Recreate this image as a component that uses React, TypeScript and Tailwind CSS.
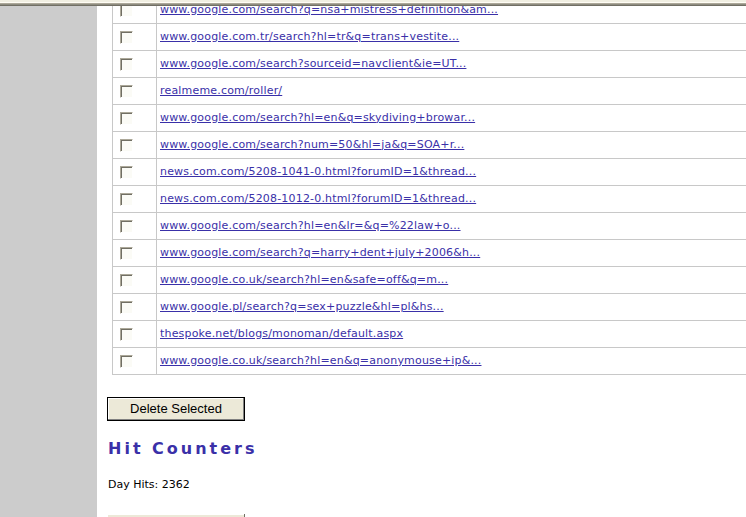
const links = [
    "www.google.com/search?q=nsa+mistress+definition&am...",
    "www.google.com.tr/search?hl=tr&q=trans+vestite...",
    "www.google.com/search?sourceid=navclient&ie=UT...",
    "realmeme.com/roller/",
    "www.google.com/search?hl=en&q=skydiving+browar...",
    "www.google.com/search?num=50&hl=ja&q=SOA+r...",
    "news.com.com/5208-1041-0.html?forumID=1&thread...",
    "news.com.com/5208-1012-0.html?forumID=1&thread...",
    "www.google.com/search?hl=en&lr=&q=%22law+o...",
    "www.google.com/search?q=harry+dent+july+2006&h...",
    "www.google.co.uk/search?hl=en&safe=off&q=m...",
    "www.google.pl/search?q=sex+puzzle&hl=pl&hs...",
    "thespoke.net/blogs/monoman/default.aspx",
    "www.google.co.uk/search?hl=en&q=anonymouse+ip&...",
];

const CheckBox = () => (
    <div className="w-[13px] h-[13px] border border-[#aca899] border-r-white border-b-white">
        <div className="w-full h-full bg-[#fbfbf6] shadow-[inset_1px_1px_0_#716f64]" />
    </div>
);

const App = () => {
    return (
        <div className="w-[746px] h-[517px] overflow-hidden bg-white flex flex-col font-['DejaVu_Sans',sans-serif] text-[11px] text-black">
            {/* window frame edge */}
            <div className="relative z-10 shrink-0 flex flex-col">
                <div className="h-[2px] bg-[#f1efe2]" />
                <div className="h-[1px] bg-[#fffdf5]" />
                <div className="h-[1px] bg-[#aca899]" />
                <div className="h-[1px] bg-[#8e8c80]" />
                <div className="h-[1px] bg-[#716f64]" />
            </div>

            <div className="flex flex-1 min-h-0">
                {/* left nav column */}
                <div className="w-[97px] shrink-0 bg-[#cccccc]" />

                {/* main content */}
                <div className="flex-1 min-w-0 overflow-hidden">
                    <div className="-mt-[10px] pl-[15px]">
                        <table className="w-[640px] border-collapse">
                            <tbody>
                                {links.map((link) => (
                                    <tr key={link} className="h-[27px]">
                                        <td className="w-[44px] border border-[#c8c8c8] pl-[7px] align-middle">
                                            <CheckBox />
                                        </td>
                                        <td className="border border-[#c8c8c8] pl-[3px] align-middle">
                                            <a href="#" className="text-[#3a30a8] underline tracking-[0.18px]">{link}</a>
                                        </td>
                                    </tr>
                                ))}
                            </tbody>
                        </table>
                    </div>

                    <div className="pl-[10px] pt-[22px] flex flex-col items-start">
                        <button className="w-[138px] h-[24px] bg-[#ece9d8] border border-black shadow-[inset_-1px_-1px_0_#808080,inset_1px_1px_0_#fff] font-['Liberation_Sans',sans-serif] text-[13px] text-black">
                            Delete Selected
                        </button>

                        <h2 className="mt-[18px] ml-[1px] font-bold text-[16px] tracking-[3px] text-[#3a30a8] leading-[20px]">
                            Hit Counters
                        </h2>

                        <p className="mt-[19px] ml-[1px] leading-[14px]">Day Hits: 2362</p>

                        <button className="mt-[22px] w-[138px] h-[24px] bg-[#ece9d8] shadow-[inset_-1px_-1px_0_#716f64,inset_1px_1px_0_#fff] font-['Liberation_Sans',sans-serif] text-[13px] text-black">
                            Reset Counters
                        </button>
                    </div>
                </div>
            </div>
        </div>
    );
};

export default App;
